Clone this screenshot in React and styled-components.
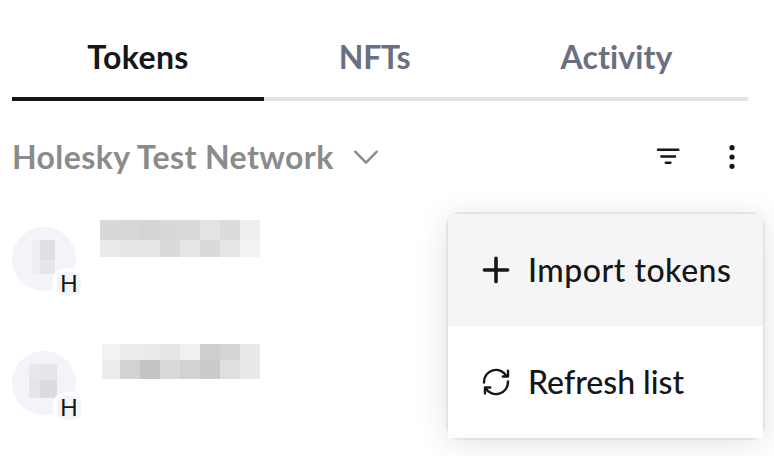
import React from 'react';
import styled, { createGlobalStyle } from 'styled-components';

const GlobalStyle = createGlobalStyle`
  * { box-sizing: border-box; }
  body { margin: 0; background: #fff; }
`;

const Page = styled.main`
  position: relative;
  width: 774px;
  height: 456px;
  overflow: hidden;
  padding: 17px 26px 0 12px;
  background: #fff;
  color: #141618;
  font-family: Lato, 'Open Sans', sans-serif;
  font-size: 32px;
  line-height: 40px;
`;

const Tabs = styled.nav`
  display: grid;
  grid-template-columns: 252px 222px 262px;
  height: 84px;
`;

const Tab = styled.button`
  display: flex;
  justify-content: center;
  align-items: flex-start;
  padding: 20px ${(p) => (p.$active ? 0 : 1)}px 0 0;
  border: 0;
  border-bottom: 4px solid ${(p) => (p.$active ? '#141618' : '#e2e2ea')};
  background: none;
  color: ${(p) => (p.$active ? '#141618' : '#6a7080')};
  font: inherit;
  font-weight: 700;
  letter-spacing: ${(p) => p.$tracking}px;
`;

const Toolbar = styled.div`
  display: flex;
  align-items: center;
  height: 112px;
`;

const NetworkButton = styled.button`
  display: flex;
  align-items: center;
  gap: 18px;
  margin-right: auto;
  padding: 0;
  border: 0;
  background: none;
  color: #8a8b8b;
  font: inherit;
  font-weight: 700;
  letter-spacing: ${(p) => p.$tracking}px;
`;

const IconButton = styled.button`
  display: flex;
  width: 32px;
  height: 32px;
  margin-left: 32px;
  padding: 0;
  border: 0;
  background: none;
  color: #141618;
`;

const TokenRow = styled.div`
  display: flex;
  height: 124px;
`;

const Avatar = styled.div`
  position: relative;
  display: flex;
  width: 64px;
  height: 64px;
  margin-top: 14px;
  border-radius: 50%;
  background: #f2f4f9;
`;

const Badge = styled.span`
  position: absolute;
  left: 41px;
  top: 41px;
  width: 32px;
  height: 32px;
  border: 4px solid #fff;
  border-radius: 12px;
  background: #f2f4f9;
  font: 24px/24px 'Liberation Sans', sans-serif;
  text-align: center;
`;

const Mosaic = styled.div`
  display: grid;
  align-self: flex-start;
  grid-template-columns: ${(p) => p.$columns};
  grid-template-rows: ${(p) => p.$rows};
  margin: ${(p) => p.$margin};
`;

const Cell = styled.i`
  background: ${(p) => p.$color};
`;

const Menu = styled.div`
  position: absolute;
  left: 446px;
  top: 212px;
  width: 319px;
  height: 228px;
  border: 2px solid #e2e2ea;
  border-radius: 14px;
  box-shadow: 0 4px 32px rgba(0, 0, 0, 0.11);
`;

const MenuItem = styled.button`
  display: flex;
  align-items: center;
  gap: 16px;
  width: 100%;
  height: 112px;
  padding: 0 0 0 32px;
  border: 0;
  background: ${(p) => (p.$hovered ? '#f5f5f5' : '#fff')};
  color: #141618;
  font: inherit;
  font-weight: 500;
  letter-spacing: ${(p) => p.$tracking}px;
  white-space: nowrap;
`;

const Icon = styled.svg`
  flex: none;
  width: ${(p) => p.$width || 32}px;
  height: 32px;
  fill: none;
  stroke: currentColor;
  stroke-width: ${(p) => p.$stroke || 2};
  stroke-linecap: round;
  stroke-linejoin: round;
`;

const tokens = [
  {
    avatar: { columns: '8px 15px', rows: '20px 14px', margin: '13px 0 0 20px', colors: ['#eeeff3', '#dddfe3', '#eeeff3', '#e6e7eb'] },
    name: {
      columns: 'repeat(8, 20px)', rows: '20px 17px', margin: '7px 0 0 24px',
      colors: ['#d8d8d8', '#d7d7d7', '#d5d5d5', '#d8d8d8', '#d7dad9', '#e3e3e3', '#dcdcdc', '#eeeeee',
        '#ebebeb', '#e5e5e5', '#e5e5e5', '#dadada', '#e5e5e5', '#dadada', '#e5e5e5', '#f3f3f3'],
    },
  },
  {
    avatar: { columns: '11px 17px', rows: '16px 18px', margin: '13px 0 0 17px', colors: ['#e7e8ec', '#e5e6ea', '#e5e6ea', '#dbdce0'] },
    name: {
      columns: '18px repeat(7, 20px)', rows: '16px 19px', margin: '7px 0 0 26px',
      colors: ['#f2f2f2', '#ebedec', '#ebebeb', '#e6e6e6', '#f0f0f0', '#cfcfcf', '#d4d4d4', '#e9e9e9',
        '#ececec', '#d2d2d2', '#c4c4c4', '#d9d9d9', '#d2d2d2', '#cbcbcb', '#dfdfdf', '#e9e9e9'],
    },
  },
];

function Pixels({ columns, rows, margin, colors }) {
  return (
    <Mosaic $columns={columns} $rows={rows} $margin={margin}>
      {colors.map((color, i) => <Cell key={i} $color={color} />)}
    </Mosaic>
  );
}

export default function App() {
  return (
    <Page>
      <GlobalStyle />
      <Tabs>
        <Tab $active $tracking={0.4}>Tokens</Tab>
        <Tab $tracking={-0.3}>NFTs</Tab>
        <Tab $tracking={0.1}>Activity</Tab>
      </Tabs>
      <Toolbar>
        <NetworkButton $tracking={0.4}>
          Holesky Test Network
          <Icon $width={28} viewBox="0 0 28 32" $stroke={2.4}>
            <path d="M3.2 10.7 14 21.7 24.8 10.7" />
          </Icon>
        </NetworkButton>
        <IconButton aria-label="Filter">
          <Icon viewBox="0 0 32 32" $stroke={2.5}>
            <path d="M6 8.7h20.3M9.4 15.5h13.6M13.8 21.8h4.6" />
          </Icon>
        </IconButton>
        <IconButton aria-label="More options">
          <Icon viewBox="0 0 32 32">
            <g fill="currentColor" stroke="none">
              <circle cx="16" cy="6.7" r="2.6" />
              <circle cx="16" cy="16" r="2.6" />
              <circle cx="16" cy="25.3" r="2.6" />
            </g>
          </Icon>
        </IconButton>
      </Toolbar>
      {tokens.map((token, i) => (
        <TokenRow key={i}>
          <Avatar>
            <Pixels {...token.avatar} />
            <Badge>H</Badge>
          </Avatar>
          <Pixels {...token.name} />
        </TokenRow>
      ))}
      <Menu>
        <MenuItem $hovered $tracking={0.5}>
          <Icon viewBox="0 0 32 32" $stroke={3.6}>
            <path d="M4.4 16h23.2M16 4.4v23.2" />
          </Icon>
          Import tokens
        </MenuItem>
        <MenuItem $tracking={0}>
          <Icon viewBox="0 0 32 32" $stroke={2.4}>
            <path d="M4 16.6A12 12 0 0 1 26.6 10.3M28 4.6v5.9h-5.2" />
            <path d="M28 15.4A12 12 0 0 1 5.4 21.7M5 27.4v-5.9h5.2" />
          </Icon>
          Refresh list
        </MenuItem>
      </Menu>
    </Page>
  );
}
